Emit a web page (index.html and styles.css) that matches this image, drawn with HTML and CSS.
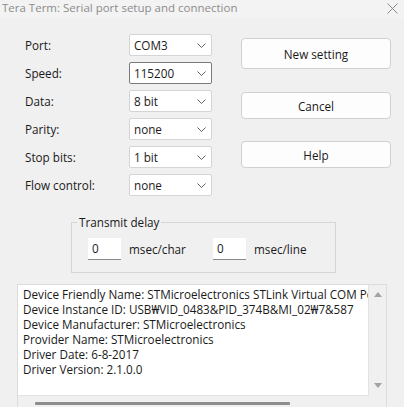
FILE: index.html
```html
<!DOCTYPE html>
<html>
<head>
<meta charset="utf-8">
<link rel="stylesheet" href="styles.css">
</head>
<body>
<div class="window">
  <div class="titlebar">
    <span class="title">Tera Term: Serial port setup and connection</span>
    <svg class="close" width="11" height="11" viewBox="0 0 11 11"><path d="M0.5 0.5 L10.5 10.5 M10.5 0.5 L0.5 10.5" stroke="#8a8a8a" stroke-width="1" fill="none"/></svg>
  </div>
  <div class="main">
    <div class="form">
      <span class="label">Port:</span>
      <div class="combo"><span>COM3</span><svg class="chev" width="9" height="5" viewBox="0 0 9 5"><path d="M0.5 0.5 L4.5 4.5 L8.5 0.5" stroke="#5f5f5f" fill="none"/></svg></div>
      <span class="label">Speed:</span>
      <div class="combo focus"><span>115200</span><svg class="chev" width="9" height="5" viewBox="0 0 9 5"><path d="M0.5 0.5 L4.5 4.5 L8.5 0.5" stroke="#5f5f5f" fill="none"/></svg></div>
      <span class="label">Data:</span>
      <div class="combo"><span>8 bit</span><svg class="chev" width="9" height="5" viewBox="0 0 9 5"><path d="M0.5 0.5 L4.5 4.5 L8.5 0.5" stroke="#5f5f5f" fill="none"/></svg></div>
      <span class="label">Parity:</span>
      <div class="combo"><span>none</span><svg class="chev" width="9" height="5" viewBox="0 0 9 5"><path d="M0.5 0.5 L4.5 4.5 L8.5 0.5" stroke="#5f5f5f" fill="none"/></svg></div>
      <span class="label">Stop bits:</span>
      <div class="combo"><span>1 bit</span><svg class="chev" width="9" height="5" viewBox="0 0 9 5"><path d="M0.5 0.5 L4.5 4.5 L8.5 0.5" stroke="#5f5f5f" fill="none"/></svg></div>
      <span class="label">Flow control:</span>
      <div class="combo"><span>none</span><svg class="chev" width="9" height="5" viewBox="0 0 9 5"><path d="M0.5 0.5 L4.5 4.5 L8.5 0.5" stroke="#5f5f5f" fill="none"/></svg></div>
    </div>
    <div class="buttons">
      <div class="btn default">New setting</div>
      <div class="btn cancel">Cancel</div>
      <div class="btn help">Help</div>
    </div>
  </div>
  <fieldset class="group">
    <legend>Transmit delay</legend>
    <div class="delays">
      <div class="edit">0</div><span class="unit first">msec/char</span>
      <div class="edit">0</div><span class="unit">msec/line</span>
    </div>
  </fieldset>
  <div class="info">
    <div class="inforow">
      <div class="text">
        <div>Device Friendly Name: STMicroelectronics STLink Virtual COM Port</div>
        <div>Device Instance ID: USB₩VID_0483&amp;PID_374B&amp;MI_02₩7&amp;587</div>
        <div>Device Manufacturer: STMicroelectronics</div>
        <div>Provider Name: STMicroelectronics</div>
        <div>Driver Date: 6-8-2017</div>
        <div>Driver Version: 2.1.0.0</div>
      </div>
      <div class="vscroll">
        <svg width="8" height="5" viewBox="0 0 8 5"><path d="M0 5 L4 0 L8 5 Z" fill="#a3a3a3"/></svg>
        <svg width="8" height="5" viewBox="0 0 8 5"><path d="M0 0 L4 5 L8 0 Z" fill="#a3a3a3"/></svg>
      </div>
    </div>
    <div class="hscroll"><div class="thumb"></div></div>
  </div>
</div>
</body>
</html>
```
FILE: styles.css
```css
html, body {
  margin: 0;
  padding: 0;
}
body {
  width: 404px;
  height: 407px;
  overflow: hidden;
  background: #f0f0f0;
  font-family: "Open Sans", "Noto Sans", sans-serif;
  font-size: 11.7px;
  color: #1a1a1a;
}
.window {
  display: flex;
  flex-direction: column;
}
.titlebar {
  height: 18px;
  background: #f3f3f3;
  display: flex;
  align-items: center;
  justify-content: space-between;
  padding: 0 6px 2px 2px;
  box-sizing: border-box;
}
.title {
  color: #8c8c8c;
  font-size: 11.5px;
  line-height: 16px;
}
.close {
  display: block;
}
.main {
  display: flex;
  padding-top: 16px;
}
.form {
  display: grid;
  grid-template-columns: 104px 83px;
  grid-auto-rows: 22px;
  row-gap: 6px;
  padding-left: 25px;
}
.label {
  align-self: center;
  line-height: 16px;
}
.combo {
  box-sizing: border-box;
  height: 22px;
  background: #ffffff;
  border: 1px solid #d4d4d4;
  border-radius: 2px;
  display: flex;
  align-items: center;
  justify-content: space-between;
  padding: 0 5px 0 4px;
}
.combo.focus {
  border-color: #7a7a7a;
}
.chev {
  display: block;
  margin-top: 1px;
}
.buttons {
  display: flex;
  flex-direction: column;
  margin-left: 29px;
  padding-top: 4px;
  width: 150px;
}
.btn {
  box-sizing: border-box;
  background: #fdfdfd;
  border: 1px solid #d0d0d0;
  border-radius: 4px;
  display: flex;
  align-items: center;
  justify-content: center;
  height: 27px;
}
.btn.default {
  height: 31px;
}
.btn.cancel {
  margin-top: 23px;
}
.btn.help {
  margin-top: 22px;
}
.group {
  box-sizing: border-box;
  margin: 18px 0 0 71px;
  width: 265px;
  padding: 8px 0 12px 16px;
  border: 1px solid #d5d5d5;
  min-width: 0;
}
.group legend {
  padding: 0 2px;
  margin-left: -11px;
  line-height: 16px;
}
.delays {
  display: flex;
  align-items: center;
}
.edit {
  box-sizing: border-box;
  width: 33px;
  height: 22px;
  flex: none;
  background: #ffffff;
  border-bottom: 1px solid #8a8a8a;
  padding-left: 4px;
  line-height: 21px;
}
.unit {
  margin-left: 8px;
}
.unit.first {
  width: 84px;
  flex: none;
}
.info {
  box-sizing: border-box;
  margin: 11px 0 0 17px;
  width: 370px;
  height: 130px;
  border: 1px solid #dcdcdc;
  display: flex;
  flex-direction: column;
}
.inforow {
  display: flex;
  height: 111px;
}
.text {
  box-sizing: border-box;
  width: 351px;
  height: 111px;
  background: #ffffff;
  border-right: 1px solid #e3e3e3;
  border-bottom: 1px solid #e3e3e3;
  padding: 2px 0 0 5px;
  line-height: 15px;
  white-space: nowrap;
  overflow: hidden;
}
.vscroll {
  flex: 1;
  display: flex;
  flex-direction: column;
  justify-content: space-between;
  align-items: center;
  padding: 7px 0 8px;
}
.vscroll svg {
  display: block;
}
.hscroll {
  padding: 6px 0 0 17px;
}
.thumb {
  width: 255px;
  height: 3px;
  background: #8d8d8d;
  border-radius: 1px;
}
```
